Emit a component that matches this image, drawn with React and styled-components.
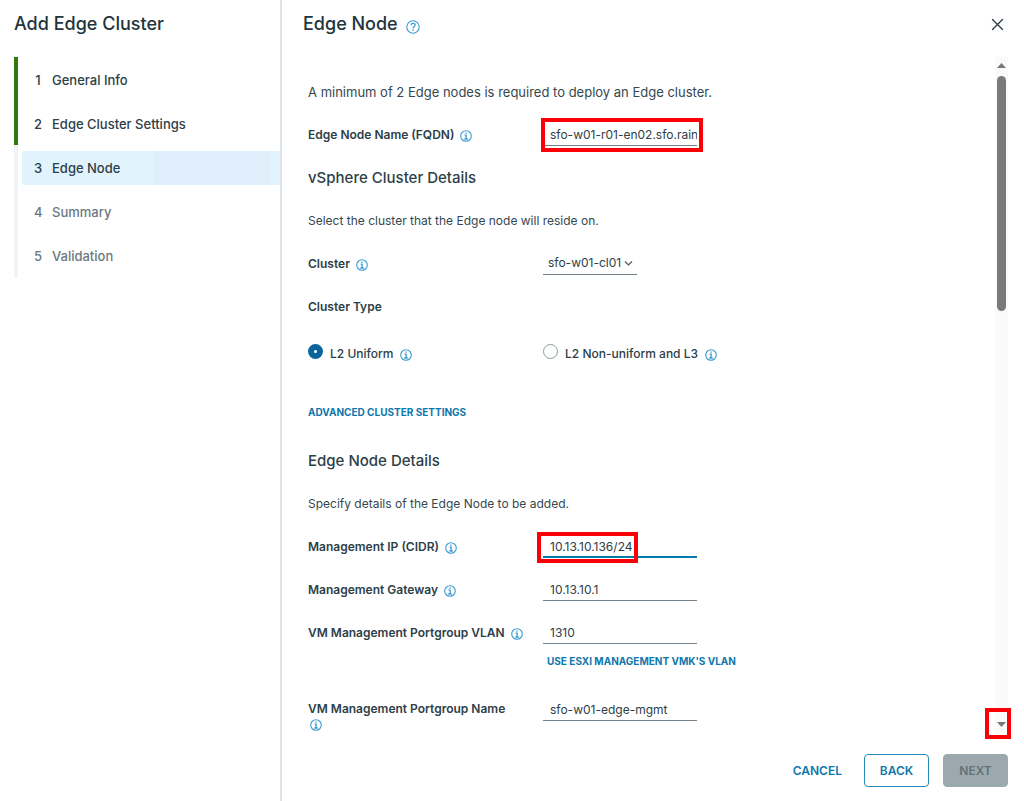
import React, { useState } from 'react';
import styled, { createGlobalStyle, css } from 'styled-components';

const GlobalStyle = createGlobalStyle`
*, *::before, *::after {
    box-sizing: border-box;
}
body {
    margin: 0;
    background: #ffffff;
    color: #2d4048;
    font-family: Metropolis, Inter, "Open Sans", sans-serif;
    font-size: 12px;
    line-height: 16px;
}
button, input, select {
    font: inherit;
    color: inherit;
}
`;

const Wizard = styled.div`
    display: flex;
    min-height: 100vh;
`;

const Sidebar = styled.aside`
    flex: 0 0 282px;
    padding-left: 14px;
    border-right: 2px solid #dee3e7;
`;

const SidebarTitle = styled.h1`
    margin: 0;
    height: 57px;
    padding-top: 12px;
    font-size: 18px;
    line-height: 24px;
    font-weight: 500;
    color: #22343c;
`;

const Steps = styled.ol`
    list-style: none;
    margin: 0;
    padding: 0;
`;

const Step = styled.li`
    height: 44px;
    padding: 6px 0 4px 4px;
    border-left: 4px solid ${props => (props.$done ? '#347a08' : '#eef4f7')};
`;

const StepLink = styled.a`
    display: flex;
    align-items: center;
    gap: 10px;
    height: 34px;
    padding-left: 12px;
    border-radius: 2px 0 0 2px;
    font-size: 13px;
    font-weight: 500;
    text-decoration: none;
    color: ${props => (props.$pending ? '#6c7980' : '#2d4048')};
    ${props => props.$current && css`
        background: linear-gradient(90deg, #e1f4fe 0 51%, #e1effc 51% 96%, #e1f4fe 96%);
    `}
`;

const StepNumber = styled.span`
    width: 8px;
    text-align: center;
`;

const Main = styled.main`
    flex: 1;
    display: flex;
    flex-direction: column;
    min-width: 0;
`;

const Header = styled.header`
    display: flex;
    justify-content: space-between;
    height: 57px;
    padding: 12px 18px 0 21px;
`;

const IconButton = styled.button`
    display: inline-flex;
    padding: 0;
    border: 0;
    background: none;
    color: #3a9bd0;
    cursor: pointer;
`;

const Title = styled.h2`
    display: flex;
    align-items: flex-end;
    gap: 8px;
    margin: 0;
    height: 24px;
    font-size: 18px;
    line-height: 24px;
    font-weight: 500;
    color: #22343c;

    ${IconButton} {
        margin-bottom: 2px;
    }
`;

const CloseButton = styled(IconButton)`
    margin: 4px 0;
    padding: 2px;
    align-self: flex-start;
    color: #2d4048;
`;

const InfoButton = styled(IconButton)`
    margin-top: 2px;
`;

const Body = styled.div`
    flex: 1;
    display: flex;
    padding-right: 16px;
`;

const Form = styled.form`
    flex: 1;
    padding: 14px 0 0 26px;
`;

const Row = styled.div`
    display: grid;
    grid-template-columns: 235px 1fr;
    align-items: center;
    min-height: 43px;
    margin-top: ${props => props.$space || 0}px;
`;

const Text = styled.p`
    display: flex;
    align-items: center;
    height: ${props => (props.$lead ? 42 : 43)}px;
    margin: 0;
    font-size: ${props => (props.$lead ? 13 : 12)}px;
    color: #35474f;
`;

const SectionTitle = styled.h3`
    display: flex;
    align-items: center;
    height: 43px;
    margin: ${props => props.$space || 0}px 0 0;
    font-size: 15px;
    font-weight: 500;
`;

const LabelCell = styled.div`
    display: flex;
    align-items: center;
    gap: 6px;
    ${props => props.$stacked && css`
        align-self: start;
        flex-direction: column;
        align-items: flex-start;
        gap: 0;
        padding-top: 13px;

        ${InfoButton} {
            margin-left: 2px;
        }
    `}
`;

const Label = styled.label`
    font-weight: 600;
`;

const GroupLabel = styled.div`
    font-weight: 600;
`;

const FieldBox = styled.div`
    position: relative;
    justify-self: start;
    display: flex;
`;

const Input = styled.input`
    width: 154px;
    height: 23px;
    padding: ${props => (props.$active ? 2 : 0)}px 0 0 7px;
    border: 0;
    border-bottom: ${props => (props.$active ? '2px solid #0079ad' : '1px solid #72818a')};
    border-radius: 0;
    outline: none;
    background: none;
`;

const SelectBox = styled.div`
    position: relative;
    justify-self: start;

    svg {
        position: absolute;
        right: 4px;
        top: 8px;
        pointer-events: none;
    }
`;

const Select = styled.select`
    width: 94px;
    height: 23px;
    padding: 0 5px;
    appearance: none;
    border: 0;
    border-bottom: 1px solid #72818a;
    border-radius: 0;
    outline: none;
    background: none;
`;

const RadioRow = styled(Row)`
    min-height: 50px;
`;

const RadioCell = styled.div`
    display: flex;
    align-items: center;
    gap: 7px;
    height: 20px;
`;

const RadioLabel = styled.label`
    font-weight: 500;
`;

const Radio = styled.input`
    appearance: none;
    align-self: flex-start;
    width: 15px;
    height: 15px;
    margin: 0;
    border: 1px solid #8f9ba1;
    border-radius: 50%;
    background: #ffffff;

    &:checked {
        border: 6px solid #0b659c;
    }
`;

const TextButton = styled.button`
    height: 16px;
    padding: 0;
    border: 0;
    background: none;
    font-size: ${props => (props.$large ? 12 : 10)}px;
    line-height: 16px;
    font-weight: ${props => (props.$large ? 600 : 700)};
    text-transform: uppercase;
    white-space: nowrap;
    color: #0f77ac;
    cursor: pointer;
`;

const AdvancedRow = styled.div`
    display: flex;
    align-items: center;
    height: 43px;
    margin-top: 11px;
`;

const LinkRow = styled.div`
    display: flex;
    align-items: center;
    height: 14px;
    padding-left: 239px;
`;

const Callout = styled.span`
    position: absolute;
    border: 4px solid #fb0007;
    pointer-events: none;
    inset: ${props => props.$inset};
`;

const ScrollCallout = styled(Callout)`
    height: 31px;
`;

const Scrollbar = styled.div`
    position: relative;
    display: flex;
    flex-direction: column;
    align-items: center;
    width: 13px;
    background: #fafafa;
`;

const Arrow = styled.div`
    flex: 0 0 ${props => props.$size}px;
    display: flex;
    align-items: center;
    justify-content: center;
    color: #777777;
`;

const Track = styled.div`
    flex: 1;
    width: 9px;
    padding-top: 3px;
`;

const Thumb = styled.div`
    height: 37%;
    border-radius: 5px;
    background: #7a7a7a;
`;

const Footer = styled.footer`
    display: flex;
    justify-content: flex-end;
    align-items: center;
    gap: 14px;
    padding: 16px 16px 14px;

    ${TextButton} {
        margin-right: 8px;
    }
`;

const Button = styled.button`
    width: 65px;
    height: 33px;
    padding: 0;
    border: 1px solid #2a8bbd;
    border-radius: 4px;
    background: #ffffff;
    font-size: 12px;
    font-weight: 600;
    text-transform: uppercase;
    color: #0f77ac;

    &:disabled {
        border-color: #9ba8ad;
        background: #9ba8ad;
        color: #62727a;
    }
`;

const InfoIcon = () => (
    <svg width="12" height="12" viewBox="0 0 12 12" fill="none" stroke="currentColor">
        <circle cx="6" cy="6" r="5.3" strokeWidth="1.1" />
        <path d="M6 2.5v1.3M4.6 5.2h1.5v3.7M4.3 9h3.5" strokeWidth="1.3" />
    </svg>
);

const HelpIcon = () => (
    <svg width="14" height="14" viewBox="0 0 14 14" fill="none" stroke="currentColor">
        <circle cx="7" cy="7" r="6.2" strokeWidth="1.1" />
        <path d="M4.9 5.2c.2-1.2 1-1.8 2.2-1.8 1.3 0 2.1.7 2.1 1.7 0 1.5-2.1 1.5-2.1 3.3M7.1 9.6V11" strokeWidth="1.2" />
    </svg>
);

const Info = ({ name }) => (
    <InfoButton type="button" aria-label={`About ${name}`}>
        <InfoIcon />
    </InfoButton>
);

const steps = ['General Info', 'Edge Cluster Settings', 'Edge Node', 'Summary', 'Validation'];
const current = 2;

const Field = ({ id, label, value, onChange, active, callout, stacked, space }) => (
    <Row $space={space}>
        <LabelCell $stacked={stacked}>
            <Label htmlFor={id}>{label}</Label>
            <Info name={label} />
        </LabelCell>
        <FieldBox>
            <Input id={id} name={id} type="text" value={value} onChange={onChange} $active={active} />
            {callout && <Callout $inset={callout} />}
        </FieldBox>
    </Row>
);

const App = () => {
    const [form, setForm] = useState({
        fqdn: 'sfo-w01-r01-en02.sfo.rain',
        cluster: 'sfo-w01-cl01',
        clusterType: 'uniform',
        ip: '10.13.10.136/24',
        gateway: '10.13.10.1',
        vlan: '1310',
        portgroup: 'sfo-w01-edge-mgmt',
    });

    const handleChange = (e) => {
        setForm({ ...form, [e.target.name]: e.target.value });
    };

    return (
        <Wizard>
            <GlobalStyle />
            <Sidebar>
                <SidebarTitle>Add Edge Cluster</SidebarTitle>
                <Steps>
                    {steps.map((step, i) => (
                        <Step key={step} $done={i < current}>
                            <StepLink href="#" $current={i === current} $pending={i > current}>
                                <StepNumber>{i + 1}</StepNumber>
                                <span>{step}</span>
                            </StepLink>
                        </Step>
                    ))}
                </Steps>
            </Sidebar>
            <Main>
                <Header>
                    <Title>
                        Edge Node
                        <IconButton type="button" aria-label="Help">
                            <HelpIcon />
                        </IconButton>
                    </Title>
                    <CloseButton type="button" aria-label="Close">
                        <svg width="13" height="13" viewBox="0 0 13 13" fill="none" stroke="currentColor" strokeWidth="1.4" strokeLinecap="round">
                            <path d="M1.5 1.5l10 10M11.5 1.5l-10 10" />
                        </svg>
                    </CloseButton>
                </Header>
                <Body>
                    <Form onSubmit={(e) => e.preventDefault()}>
                        <Text $lead>A minimum of 2 Edge nodes is required to deploy an Edge cluster.</Text>
                        <Field id="fqdn" label="Edge Node Name (FQDN)" value={form.fqdn} onChange={handleChange} callout="-5px -6px -6px -2px" />

                        <SectionTitle>vSphere Cluster Details</SectionTitle>
                        <Text>Select the cluster that the Edge node will reside on.</Text>
                        <Row>
                            <LabelCell>
                                <Label htmlFor="cluster">Cluster</Label>
                                <Info name="Cluster" />
                            </LabelCell>
                            <SelectBox>
                                <Select id="cluster" name="cluster" value={form.cluster} onChange={handleChange}>
                                    <option>sfo-w01-cl01</option>
                                </Select>
                                <svg width="9" height="7" viewBox="0 0 9 7" fill="none" stroke="#4a5b63" strokeWidth="1.2">
                                    <path d="M1 1.5l3.5 3.5L8 1.5" />
                                </svg>
                            </SelectBox>
                        </Row>
                        <Row>
                            <GroupLabel id="clusterType">Cluster Type</GroupLabel>
                        </Row>
                        <RadioRow $space={1} role="radiogroup" aria-labelledby="clusterType">
                            <RadioCell>
                                <Radio type="radio" id="uniform" name="clusterType" value="uniform" checked={form.clusterType === 'uniform'} onChange={handleChange} />
                                <RadioLabel htmlFor="uniform">L2 Uniform</RadioLabel>
                                <Info name="L2 Uniform" />
                            </RadioCell>
                            <RadioCell>
                                <Radio type="radio" id="nonuniform" name="clusterType" value="nonuniform" checked={form.clusterType === 'nonuniform'} onChange={handleChange} />
                                <RadioLabel htmlFor="nonuniform">L2 Non-uniform and L3</RadioLabel>
                                <Info name="L2 Non-uniform and L3" />
                            </RadioCell>
                        </RadioRow>
                        <AdvancedRow>
                            <TextButton type="button">Advanced Cluster Settings</TextButton>
                        </AdvancedRow>

                        <SectionTitle $space={6}>Edge Node Details</SectionTitle>
                        <Text>Specify details of the Edge Node to be added.</Text>
                        <Field id="ip" label="Management IP (CIDR)" value={form.ip} onChange={handleChange} active callout="-3px 59px -5px -6px" />
                        <Field id="gateway" label="Management Gateway" value={form.gateway} onChange={handleChange} />
                        <Field id="vlan" label="VM Management Portgroup VLAN" value={form.vlan} onChange={handleChange} />
                        <LinkRow>
                            <TextButton type="button">Use ESXi Management VMK's VLAN</TextButton>
                        </LinkRow>
                        <Field id="portgroup" label="VM Management Portgroup Name" value={form.portgroup} onChange={handleChange} stacked space={20} />
                    </Form>
                    <Scrollbar>
                        <Arrow $size={16}>
                            <svg width="9" height="5" viewBox="0 0 9 5" fill="currentColor"><path d="M0 5L4.5 0L9 5z" /></svg>
                        </Arrow>
                        <Track>
                            <Thumb />
                        </Track>
                        <Arrow $size={28}>
                            <svg width="9" height="5" viewBox="0 0 9 5" fill="currentColor"><path d="M0 0L4.5 5L9 0z" /></svg>
                        </Arrow>
                        <ScrollCallout $inset="auto -3px -1px -10px" />
                    </Scrollbar>
                </Body>
                <Footer>
                    <TextButton type="button" $large>Cancel</TextButton>
                    <Button type="button">Back</Button>
                    <Button type="button" disabled>Next</Button>
                </Footer>
            </Main>
        </Wizard>
    );
};

export default App;
